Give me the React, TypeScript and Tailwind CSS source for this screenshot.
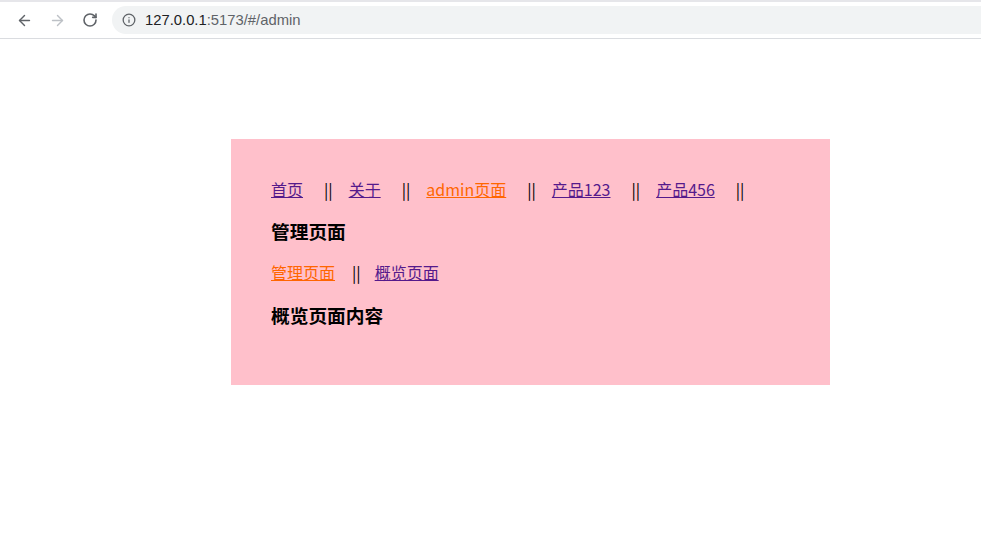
import { ArrowLeft, ArrowRight, RotateCw, Info } from 'lucide-react'

const topLinks = [
  { label: '首页', active: false },
  { label: '关于', active: false },
  { label: 'admin页面', active: true },
  { label: '产品123', active: false },
  { label: '产品456', active: false },
]

const subLinks = [
  { label: '管理页面', active: true },
  { label: '概览页面', active: false },
]

function NavRow({ links, trailing, sep }: { links: { label: string; active: boolean }[]; trailing: boolean; sep: string }) {
  return (
    <div className="flex items-center text-[16px] leading-[22px]">
      {links.map((link, i) => (
        <div key={link.label} className="flex items-center">
          <a href="#" className={`underline ${link.active ? 'text-[#ff6600]' : 'text-[#551a8b]'}`}>
            {link.label}
          </a>
          {(trailing || i < links.length - 1) && <span className={`text-black ${sep}`}>||</span>}
        </div>
      ))}
    </div>
  )
}

export default function App() {
  return (
    <div className="w-[981px] h-[538px] bg-white overflow-hidden font-['Noto_Sans_CJK_SC',sans-serif]">
      {/* browser bar */}
      <div className="h-[2px] bg-[#e6e6ea]" />
      <div className="h-[37px] flex items-center border-b border-[#dadce0]">
        <div className="flex items-center gap-[16px] pl-[16px] text-[#5f6368]">
          <ArrowLeft className="w-[17px] h-[17px]" strokeWidth={2} />
          <ArrowRight className="w-[17px] h-[17px] text-[#bdc1c6]" strokeWidth={2} />
          <RotateCw className="w-[16px] h-[16px]" strokeWidth={2.4} />
        </div>
        <div className="ml-[14px] flex-1 h-[28px] rounded-l-full bg-[#f1f3f4] flex items-center pl-[10px]">
          <Info className="w-[14px] h-[14px] text-[#5f6368]" strokeWidth={2.2} />
          <span className="ml-[9px] text-[14.8px] font-['Liberation_Sans',sans-serif]">
            <span className="text-[#202124]">127.0.0.1</span>
            <span className="text-[#5f6368]">:5173/#/admin</span>
          </span>
        </div>
      </div>

      {/* page */}
      <div className="ml-[231px] mt-[100px] w-[599px] h-[246px] bg-[#ffc0cb] px-10 pt-[39px]">
        <NavRow links={topLinks} trailing sep="ml-[21px] mr-[16px]" />
        <h3 className="mt-[19px] text-[18.72px] leading-[24px] font-bold text-black">管理页面</h3>
        <div className="mt-[18px]">
          <NavRow links={subLinks} trailing={false} sep="ml-[17px] mr-[14px]" />
        </div>
        <h3 className="mt-[20px] text-[18.72px] leading-[24px] font-bold text-black">概览页面内容</h3>
      </div>
    </div>
  )
}
